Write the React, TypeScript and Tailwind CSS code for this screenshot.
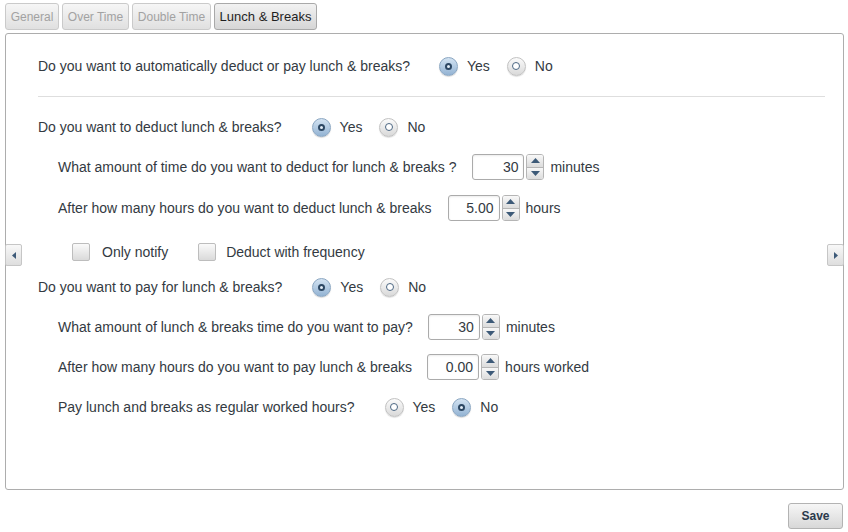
import React from "react";

const font = { fontFamily: '"Liberation Sans", Arial, sans-serif' };

function Radio({ checked, label }: { checked: boolean; label: string }) {
  return (
    <span className="flex items-center">
      <span
        className={
          checked
            ? "flex h-[19px] w-[19px] items-center justify-center rounded-full border border-[#8aa6c2] bg-gradient-to-b from-[#d3e3f2] to-[#93b3d3] shadow-[0_1px_1px_rgba(0,0,0,0.15)]"
            : "flex h-[19px] w-[19px] items-center justify-center rounded-full border border-[#c2c2c2] bg-gradient-to-b from-[#fbfbfb] to-[#d9d9d9] shadow-[0_1px_1px_rgba(0,0,0,0.12)]"
        }
      >
        <span
          className={
            checked
              ? "h-[7px] w-[7px] rounded-full border-2 border-[#2c4763] bg-[#e4eef8]"
              : "h-[8px] w-[8px] rounded-full border-[1.5px] border-[#4c6783] bg-white"
          }
        />
      </span>
      <span className="ml-[9px]">{label}</span>
    </span>
  );
}

function YesNo({ yes }: { yes: boolean }) {
  return (
    <span className="flex items-center gap-[17px]">
      <Radio checked={yes} label="Yes" />
      <Radio checked={!yes} label="No" />
    </span>
  );
}

function Spinner({ value }: { value: string }) {
  return (
    <span className="flex items-center">
      <span className="flex h-[26px] w-[52px] items-center justify-end rounded-[3px] border border-[#ababab] bg-white pr-[5px] shadow-[inset_0_1px_2px_rgba(0,0,0,0.08)]">
        {value}
      </span>
      <span className="ml-[2px] flex h-[26px] w-[18px] flex-col overflow-hidden rounded-[3px] border border-[#b5b5b5]">
        <span className="flex flex-1 items-center justify-center border-b border-[#b5b5b5] bg-gradient-to-b from-[#f8f8f8] to-[#dcdcdc]">
          <svg width="9" height="5" viewBox="0 0 9 5">
            <path d="M0 5 L4.5 0 L9 5 Z" fill="#3d5a78" />
          </svg>
        </span>
        <span className="flex flex-1 items-center justify-center bg-gradient-to-b from-[#f8f8f8] to-[#dcdcdc]">
          <svg width="9" height="5" viewBox="0 0 9 5">
            <path d="M0 0 L4.5 5 L9 0 Z" fill="#3d5a78" />
          </svg>
        </span>
      </span>
    </span>
  );
}

function Checkbox({ label, gap }: { label: string; gap: string }) {
  return (
    <span className="flex items-center">
      <span className="h-[18px] w-[18px] rounded-[2px] border border-[#bdbdbd] bg-gradient-to-b from-[#fafafa] to-[#dadada]" />
      <span className={gap}>{label}</span>
    </span>
  );
}

const tabs = [
  { label: "General", cls: "w-[54px] text-[12px]" },
  { label: "Over Time", cls: "w-[67px] text-[12px]" },
  { label: "Double Time", cls: "w-[79px] text-[12px]" },
  { label: "Lunch & Breaks", cls: "w-[103px] text-[13px]" },
];

export default function App() {
  return (
    <div className="relative h-[532px] w-[848px] bg-white text-[14px] text-[#333a42]" style={font}>
      <div className="flex gap-[3px] pl-[5px] pt-[3px]">
        {tabs.map((t, i) => {
          const active = i === tabs.length - 1;
          return (
            <div
              key={t.label}
              className={
                active
                  ? `flex h-[27px] ${t.cls} items-center justify-center rounded-[3px] border border-[#a9a9a9] bg-gradient-to-b from-[#f2f2f2] to-[#d6d6d6] text-[#1f1f1f]`
                  : `flex h-[27px] ${t.cls} items-center justify-center rounded-[3px] border border-[#cacaca] bg-gradient-to-b from-[#f6f6f6] to-[#e0e0e0] text-[#a2a2a2]`
              }
            >
              {t.label}
            </div>
          );
        })}
      </div>

      <div className="relative ml-[5px] mt-[3px] h-[457px] w-[839px] rounded-[3px] border border-[#adadad] pt-[19px]">
        <div className="flex h-[26px] items-center pl-[32px]">
          <span>Do you want to automatically deduct or pay lunch &amp; breaks?</span>
          <span className="ml-[29px]">
            <YesNo yes />
          </span>
        </div>
        <div className="ml-[32px] mt-[17px] h-px w-[787px] bg-[#dedede]" />

        <div className="mt-[17px] flex h-[26px] items-center pl-[32px]">
          <span>Do you want to deduct lunch &amp; breaks?</span>
          <span className="ml-[30px]">
            <YesNo yes />
          </span>
        </div>

        <div className="mt-[14px] flex h-[26px] items-center pl-[52px]">
          <span>What amount of time do you want to deduct for lunch &amp; breaks ?</span>
          <span className="ml-[16px]">
            <Spinner value="30" />
          </span>
          <span className="ml-[6px]">minutes</span>
        </div>

        <div className="mt-[15px] flex h-[26px] items-center pl-[52px]">
          <span>After how many hours do you want to deduct lunch &amp; breaks</span>
          <span className="ml-[16px]">
            <Spinner value="5.00" />
          </span>
          <span className="ml-[6px]">hours</span>
        </div>

        <div className="mt-[18px] flex h-[26px] items-center gap-[30px] pl-[66px]">
          <Checkbox label="Only notify" gap="ml-[12px]" />
          <Checkbox label="Deduct with frequency" gap="ml-[10px]" />
        </div>

        <div className="mt-[9px] flex h-[26px] items-center pl-[32px]">
          <span>Do you want to pay for lunch &amp; breaks?</span>
          <span className="ml-[30px]">
            <YesNo yes />
          </span>
        </div>

        <div className="mt-[14px] flex h-[26px] items-center pl-[52px]">
          <span>What amount of lunch &amp; breaks time do you want to pay?</span>
          <span className="ml-[15px]">
            <Spinner value="30" />
          </span>
          <span className="ml-[6px]">minutes</span>
        </div>

        <div className="mt-[14px] flex h-[26px] items-center pl-[52px]">
          <span>After how many hours do you want to pay lunch &amp; breaks</span>
          <span className="ml-[15px]">
            <Spinner value="0.00" />
          </span>
          <span className="ml-[6px]">hours worked</span>
        </div>

        <div className="mt-[14px] flex h-[26px] items-center pl-[52px]">
          <span>Pay lunch and breaks as regular worked hours?</span>
          <span className="ml-[30px]">
            <YesNo yes={false} />
          </span>
        </div>

        <div className="absolute left-[-1px] top-[210px] flex h-[22px] w-[17px] items-center justify-center rounded-[2px] border border-[#c6c6c6] bg-gradient-to-b from-[#f8f8f8] to-[#dedede]">
          <svg width="4" height="7" viewBox="0 0 4 7">
            <path d="M4 0 L0 3.5 L4 7 Z" fill="#3d5a78" />
          </svg>
        </div>
        <div className="absolute right-[-1px] top-[210px] flex h-[22px] w-[17px] items-center justify-center rounded-[2px] border border-[#c6c6c6] bg-gradient-to-b from-[#f8f8f8] to-[#dedede]">
          <svg width="4" height="7" viewBox="0 0 4 7">
            <path d="M0 0 L4 3.5 L0 7 Z" fill="#3d5a78" />
          </svg>
        </div>
      </div>

      <div className="flex justify-end pr-[5px] pt-[13px]">
        <div className="flex h-[26px] w-[55px] items-center justify-center rounded-[3px] border border-[#b3b3b3] bg-gradient-to-b from-[#f6f6f6] to-[#d8d8d8] text-[12px] font-bold text-[#2b3a4c]">
          Save
        </div>
      </div>
    </div>
  );
}
